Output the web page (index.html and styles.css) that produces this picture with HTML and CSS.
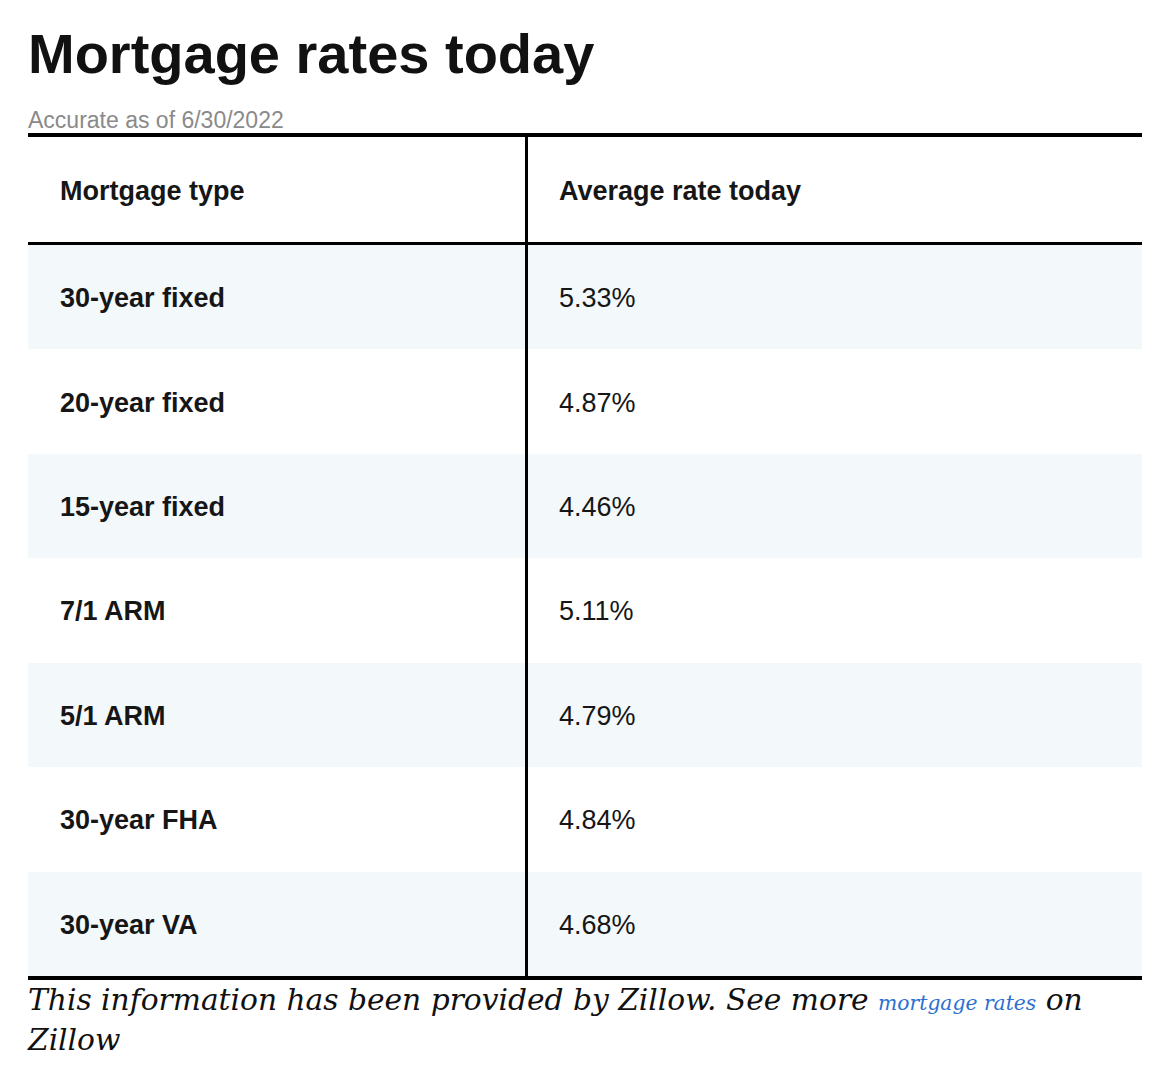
FILE: index.html
```html
<!DOCTYPE html>
<html lang="en">
<head>
<meta charset="utf-8">
<title>Mortgage rates today</title>
<link rel="stylesheet" href="styles.css">
</head>
<body>
<main class="page">
  <h1 class="title">Mortgage rates today</h1>
  <p class="asof">Accurate as of 6/30/2022</p>
  <div class="rates" role="table">
    <div class="cell head first" role="columnheader">Mortgage type</div>
    <div class="cell head" role="columnheader">Average rate today</div>

    <div class="cell type first shade">30-year fixed</div>
    <div class="cell rate shade">5.33%</div>

    <div class="cell type first">20-year fixed</div>
    <div class="cell rate">4.87%</div>

    <div class="cell type first shade">15-year fixed</div>
    <div class="cell rate shade">4.46%</div>

    <div class="cell type first">7/1 ARM</div>
    <div class="cell rate">5.11%</div>

    <div class="cell type first shade">5/1 ARM</div>
    <div class="cell rate shade">4.79%</div>

    <div class="cell type first">30-year FHA</div>
    <div class="cell rate">4.84%</div>

    <div class="cell type first shade">30-year VA</div>
    <div class="cell rate shade">4.68%</div>
  </div>
  <p class="source">This information has been provided by Zillow. See more <a class="link" href="#">mortgage rates</a> on Zillow</p>
</main>
</body>
</html>
```

FILE: styles.css
```css
html, body {
  margin: 0;
  padding: 0;
  background: #ffffff;
}

.page {
  padding: 22px 28px 0 28px;
  width: 1114px;
  color: #141414;
  font-family: "Liberation Sans", Arial, sans-serif;
}

.title {
  margin: 0;
  font-size: 56px;
  line-height: 64px;
  font-weight: 700;
  color: #111111;
}

.asof {
  margin: 21px 0 0 0;
  font-size: 23px;
  line-height: 26px;
  color: #8a8a8a;
}

.rates {
  display: grid;
  grid-template-columns: 500px 1fr;
  border-top: 4px solid #000;
  border-bottom: 4px solid #000;
}

.cell {
  box-sizing: border-box;
  display: flex;
  align-items: center;
  padding: 3px 31px 0 31px;
  height: 104.43px;
  font-size: 27px;
  color: #161616;
}

.cell.first {
  border-right: 3px solid #000;
  padding-left: 32px;
}

.cell.head {
  height: 108px;
  border-bottom: 3px solid #000;
  font-weight: 700;
}

.cell.type {
  font-weight: 700;
}

.cell.shade {
  background: #f3f8fb;
}

.source {
  margin: 0;
  font-family: "DejaVu Serif", Georgia, serif;
  font-style: italic;
  font-size: 29.7px;
  line-height: 40px;
  color: #111111;
}

.link {
  font-size: 20.3px;
  line-height: 1;
  color: #2b6fd1;
  text-decoration: none;
}
```
